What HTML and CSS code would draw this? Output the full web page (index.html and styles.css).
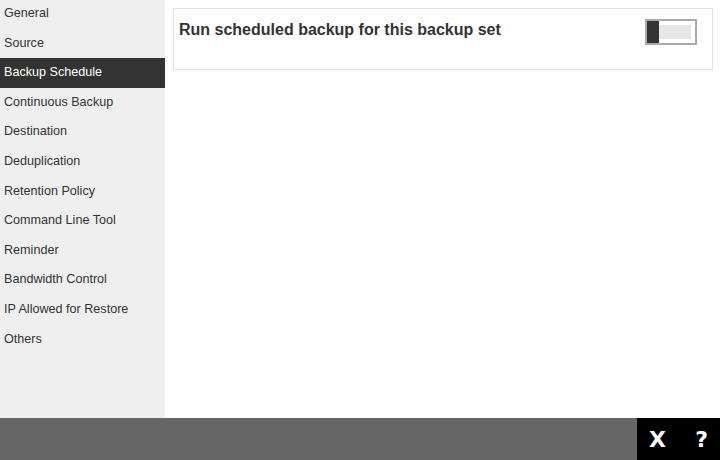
FILE: index.html
```html
<!DOCTYPE html>
<html>
<head>
<meta charset="utf-8">
<link rel="stylesheet" href="styles.css">
</head>
<body>
<div class="app">
  <div class="body">
    <nav class="sidebar">
      <ul class="menu">
        <li class="item">General</li>
        <li class="item">Source</li>
        <li class="item active">Backup Schedule</li>
        <li class="item">Continuous Backup</li>
        <li class="item">Destination</li>
        <li class="item">Deduplication</li>
        <li class="item">Retention Policy</li>
        <li class="item">Command Line Tool</li>
        <li class="item">Reminder</li>
        <li class="item">Bandwidth Control</li>
        <li class="item">IP Allowed for Restore</li>
        <li class="item">Others</li>
      </ul>
    </nav>
    <main class="main">
      <div class="card">
        <div class="title">Run scheduled backup for this backup set</div>
        <div class="toggle"><span class="knob"></span><span class="track"></span></div>
      </div>
    </main>
  </div>
  <footer class="footer">
    <div class="actions">
      <span class="btn">X</span>
      <span class="btn">?</span>
    </div>
  </footer>
</div>
</body>
</html>
```
FILE: styles.css
```css
html, body {
  margin: 0;
  padding: 0;
  width: 720px;
  height: 460px;
  overflow: hidden;
  font-family: "Liberation Sans", Arial, sans-serif;
  color: #333;
}
.app {
  display: flex;
  flex-direction: column;
  height: 460px;
}
.body {
  flex: 1;
  display: flex;
  min-height: 0;
}
.sidebar {
  width: 165px;
  background: #efefef;
  overflow: hidden;
}
.menu {
  list-style: none;
  margin: -1px 0 0 0;
  padding: 0;
}
.item {
  height: 29.6px;
  line-height: 29.6px;
  padding-left: 4px;
  font-size: 12.6px;
  color: #333;
  white-space: nowrap;
}
.item.active {
  background: #333;
  color: #fff;
}
.main {
  flex: 1;
  background: #fff;
  padding: 8px 7px 0 8px;
}
.card {
  border: 1px solid #e2e2e2;
  height: 60px;
  display: flex;
  justify-content: space-between;
  align-items: flex-start;
  padding: 0 15px 0 5px;
}
.title {
  font-size: 16px;
  font-weight: bold;
  margin-top: 12px;
  color: #333;
}
.toggle {
  margin-top: 10px;
  width: 48px;
  height: 22px;
  border: 2px solid #aaa;
  background: #fff;
  display: flex;
  align-items: center;
}
.knob {
  width: 12px;
  height: 22px;
  background: #333;
}
.track {
  width: 32px;
  height: 14px;
  background: #e6e6e6;
}
.footer {
  height: 42px;
  background: #666;
  display: flex;
  justify-content: flex-end;
}
.actions {
  width: 83px;
  background: #000;
  display: flex;
  align-items: center;
  justify-content: space-between;
  padding: 0 12px 0 12px;
  box-sizing: border-box;
}
.btn {
  color: #fff;
  font-family: "DejaVu Sans", sans-serif;
  font-weight: bold;
  font-size: 22px;
}
```
